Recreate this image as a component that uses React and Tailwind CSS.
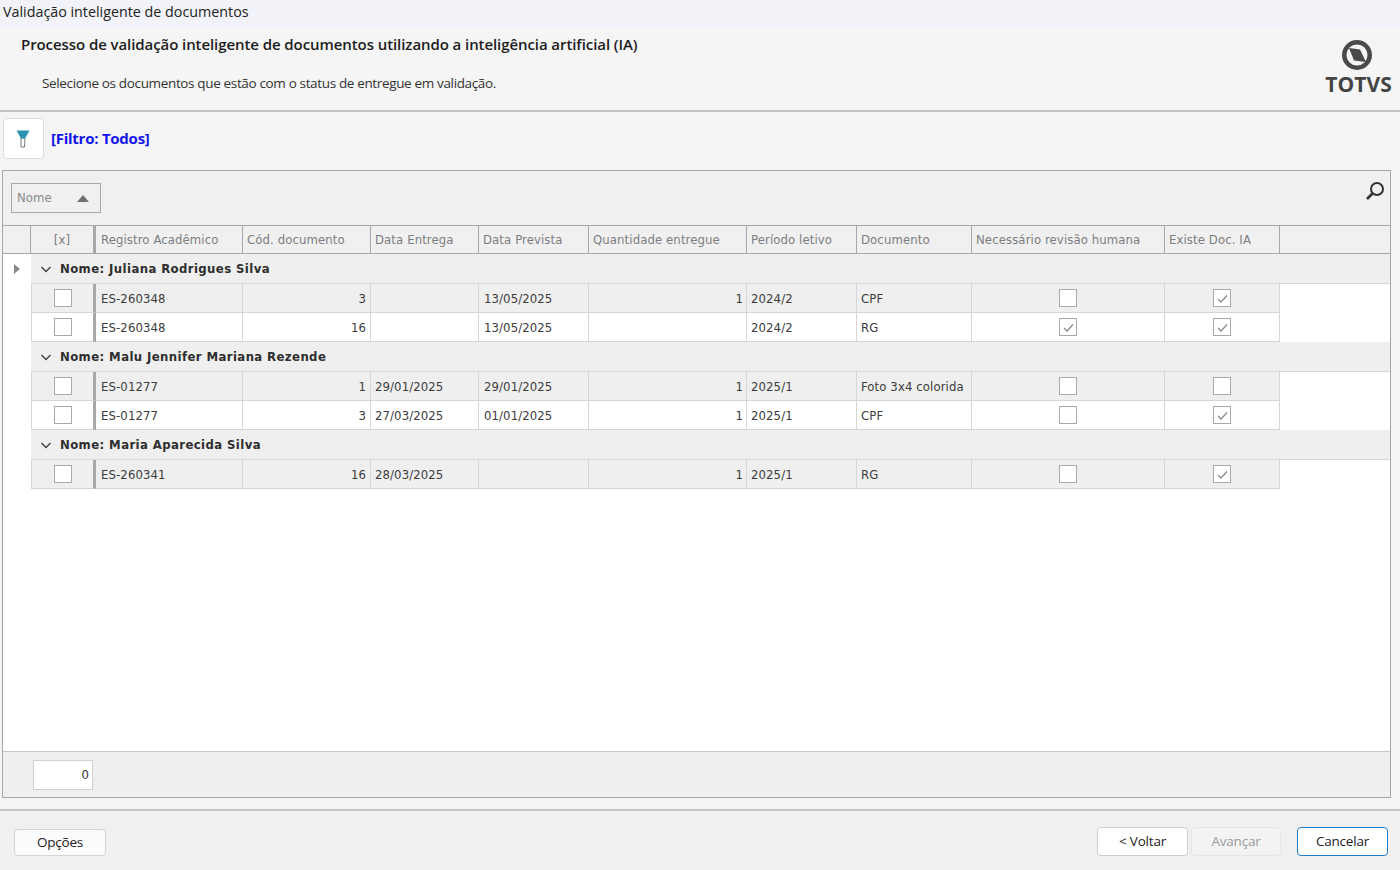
import React from "react";

const cols = [
  { w: "w-[65px]" },
  { w: "w-[147px]" },
  { w: "w-[128px]" },
  { w: "w-[108px]" },
  { w: "w-[110px]" },
  { w: "w-[158px]" },
  { w: "w-[110px]" },
  { w: "w-[115px]" },
  { w: "w-[193px]" },
  { w: "w-[115px]" },
];

const heads = ["[x]", "Registro Acadêmico", "Cód. documento", "Data Entrega", "Data Prevista", "Quantidade entregue", "Período letivo", "Documento", "Necessário revisão humana", "Existe Doc. IA"];

function Box({ checked }) {
  return (
    <span className="flex h-[18px] w-[18px] items-center justify-center border border-[#a9a9a9] bg-white">
      {checked && (
        <svg width="11" height="9" viewBox="0 0 11 9" fill="none">
          <path d="M1 5 L4 8 L10 1.5" stroke="#8a8a8a" strokeWidth="1.3" />
        </svg>
      )}
    </span>
  );
}

function Row({ alt, d }) {
  const bg = alt ? "bg-[#efefef]" : "bg-white";
  const cell = `flex h-full shrink-0 items-center border-r border-b border-[#d6d6d6] px-[4px] ${bg}`;
  const text = `${cell} pt-[1px]`;
  return (
    <div className="flex h-[29px] w-[1277px] shrink-0 text-[#3c3c3c]">
      <div className="h-full w-[28px] shrink-0 bg-white" />
      <div className={`${cell} ${cols[0].w} justify-center border-l border-l-[#d6d6d6] !border-r-[3px] !border-r-[#a8a8a8] pr-[4px]`}><Box /></div>
      <div className={`${text} ${cols[1].w} !px-[5px]`}>{d[0]}</div>
      <div className={`${text} ${cols[2].w} justify-end`}>{d[1]}</div>
      <div className={`${text} ${cols[3].w}`}>{d[2]}</div>
      <div className={`${text} ${cols[4].w} !px-[5px]`}>{d[3]}</div>
      <div className={`${text} ${cols[5].w} justify-end !pr-[3px]`}>{d[4]}</div>
      <div className={`${text} ${cols[6].w}`}>{d[5]}</div>
      <div className={`${text} ${cols[7].w}`}>{d[6]}</div>
      <div className={`${cell} ${cols[8].w} justify-center`}><Box checked={d[7]} /></div>
      <div className={`${cell} ${cols[9].w} justify-center`}><Box checked={d[8]} /></div>
    </div>
  );
}

function Group({ name }) {
  return (
    <div className="flex h-[30px] shrink-0">
      <div className="w-[28px] shrink-0 bg-white" />
      <div className="flex flex-1 items-center border-b border-[#d6d6d6] bg-[#efefef] pl-[9px] pt-[1px] text-[13px] font-bold tracking-[0.4px] text-[#2e2e2e]">
        <svg width="12" height="12" viewBox="0 0 12 12" fill="none" className="mr-[8px]">
          <path d="M1.5 4 L6 8.5 L10.5 4" stroke="#444" strokeWidth="1.4" />
        </svg>
        {name}
      </div>
    </div>
  );
}

function Btn({ children, className = "" }) {
  return (
    <div className={`flex items-center justify-center rounded-[4px] border ${className}`}>{children}</div>
  );
}

export default function App() {
  return (
    <div className="flex h-[870px] w-[1400px] flex-col overflow-hidden bg-[#f4f4f4] text-[13px] tracking-[0.1px] font-['DejaVu_Sans_Condensed','DejaVu_Sans',sans-serif]">
      <div className="flex h-[27px] shrink-0 items-center bg-[#f2f3f8] pb-[3px] pl-[3px] font-['Open_Sans',sans-serif] text-[14.3px] tracking-normal text-[#222]">
        Validação inteligente de documentos
      </div>

      <div className="flex h-[85px] shrink-0 justify-between border-b-2 border-[#c2c2c2] bg-[#f5f5f5] pl-[21px] pr-[8px]">
        <div className="font-['Open_Sans',sans-serif]">
          <div className="mt-[6px] text-[15px] font-semibold tracking-[-0.08px] text-[#1d1d1d]">Processo de validação inteligente de documentos utilizando a inteligência artificial (IA)</div>
          <div className="ml-[21px] mt-[17px] text-[13.5px] tracking-[-0.35px] text-[#333]">Selecione os documentos que estão com o status de entregue em validação.</div>
        </div>
        <div className="flex flex-col items-center pt-[12px]">
          <svg width="32" height="32" viewBox="0 0 32 32" className="mr-[3px]">
            <circle cx="16" cy="16" r="15" fill="#4a4a4a" />
            <circle cx="16" cy="16" r="10.5" fill="#f5f5f5" />
            <path d="M8 9 L19 10.5 L25 23 L13 21.5 Z" fill="#4a4a4a" />
          </svg>
          <div className="mt-[1px] font-['Open_Sans',sans-serif] text-[21px] font-bold leading-[24px] tracking-[0.1px] text-[#444]">TOTVS</div>
        </div>
      </div>

      <div className="flex h-[58px] shrink-0 items-center pb-[5px] pl-[3px]">
        <div className="flex h-[41px] w-[41px] items-center justify-center rounded-[4px] border border-[#dcdcdc] bg-white">
          <svg width="14" height="18" viewBox="0 0 14 18" className="mr-[1px]">
            <path d="M5 8 V17 H8.5 L9 8 Z" fill="#fff" stroke="#777" strokeWidth="1" />
            <path d="M0.5 0.5 H13.5 L9 8.5 H5 Z" fill="#2a93ad" />
          </svg>
        </div>
        <div className="ml-[7px] text-[15px] font-bold tracking-[-0.25px] text-[#1515e8] font-['Open_Sans',sans-serif]">[Filtro: Todos]</div>
      </div>

      <div className="mx-[2px] flex h-[628px] w-[1389px] shrink-0 flex-col border border-[#a6a6a6] bg-white">
        <div className="flex h-[54px] shrink-0 items-center justify-between bg-[#f0f0f0] pl-[8px] pr-[4px]">
          <div className="flex h-[30px] w-[90px] items-center justify-between border border-[#a8a8a8] px-[5px] pr-[11px] text-[#8a8a8a]">
            Nome
            <svg width="12" height="7" viewBox="0 0 12 7"><path d="M0 7 L6 0 L12 7 Z" fill="#707070" /></svg>
          </div>
          <svg width="22" height="22" viewBox="0 0 22 22" fill="none" className="mb-[14px]">
            <circle cx="13" cy="9" r="6" stroke="#333" strokeWidth="2" />
            <path d="M8.5 13.5 L3 19" stroke="#333" strokeWidth="2.6" />
          </svg>
        </div>

        <div className="flex h-[29px] shrink-0 border-y border-[#a8a8a8] bg-[#f0f0f0] text-[#7d7d80]">
          <div className="w-[28px] shrink-0 border-r border-[#a8a8a8]" />
          {heads.map((h, i) => (
            <div
              key={h}
              className={`flex shrink-0 items-center ${cols[i].w} ${i === 0 ? "justify-center border-r-[3px] border-[#a8a8a8]" : i === 1 ? "border-r border-[#a8a8a8] px-[5px]" : "border-r border-[#a8a8a8] px-[4px]"}`}
            >
              {h}
            </div>
          ))}
          <div className="flex-1" />
        </div>

        <div className="relative flex flex-1 flex-col bg-white">
          <svg width="6" height="10" viewBox="0 0 6 10" className="absolute left-[11px] top-[10px]"><path d="M0 0 L6 5 L0 10 Z" fill="#8a8a8a" /></svg>
          <Group name="Nome: Juliana Rodrigues Silva" />
          <Row alt d={["ES-260348", "3", "", "13/05/2025", "1", "2024/2", "CPF", false, true]} />
          <Row d={["ES-260348", "16", "", "13/05/2025", "", "2024/2", "RG", true, true]} />
          <Group name="Nome: Malu Jennifer Mariana Rezende" />
          <Row alt d={["ES-01277", "1", "29/01/2025", "29/01/2025", "1", "2025/1", "Foto 3x4 colorida", false, false]} />
          <Row d={["ES-01277", "3", "27/03/2025", "01/01/2025", "1", "2025/1", "CPF", false, true]} />
          <Group name="Nome: Maria Aparecida Silva" />
          <Row alt d={["ES-260341", "16", "28/03/2025", "", "1", "2025/1", "RG", false, true]} />
        </div>

        <div className="flex h-[46px] shrink-0 items-center border-t border-[#c8c8c8] bg-[#efefef] pl-[30px]">
          <div className="flex h-[30px] w-[60px] items-center justify-end border border-[#d0d0d0] bg-white pr-[3px] text-[#333]">0</div>
        </div>
      </div>

      <div className="mt-[11px] flex flex-1 items-center justify-between border-t-2 border-[#c4c4c4] bg-[#f0f0f0] pl-[14px] pr-[12px] pt-[1px] font-['Open_Sans',sans-serif] text-[13.5px] tracking-[-0.2px] text-[#222]">
        <Btn className="mt-[3px] h-[27px] w-[92px] border-[#d4d4d4] bg-[#fbfbfb]">Opções</Btn>
        <div className="flex">
          <Btn className="h-[29px] w-[91px] border-[#cfcfcf] bg-white">&lt; Voltar</Btn>
          <Btn className="ml-[3px] h-[29px] w-[90px] border-[#e6e6e6] bg-[#f3f3f3] text-[#9a9a9a]">Avançar</Btn>
          <Btn className="ml-[16px] h-[29px] w-[91px] border-[#1f7fc9] bg-white">Cancelar</Btn>
        </div>
      </div>
    </div>
  );
}
